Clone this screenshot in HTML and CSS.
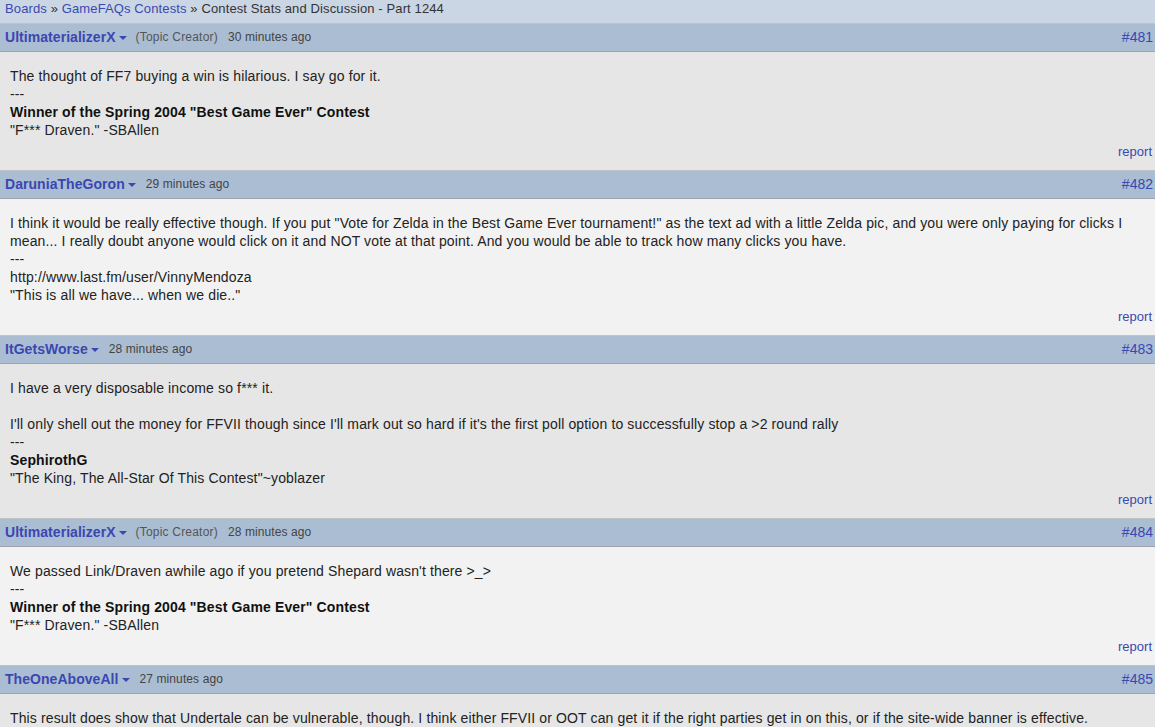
FILE: index.html
```html
<!DOCTYPE html>
<html>
<head>
<meta charset="utf-8">
<link rel="stylesheet" href="styles.css">
</head>
<body>
<div class="crumbs"><a href="#">Boards</a> » <a href="#">GameFAQs Contests</a> » Contest Stats and Discussion - Part 1244</div>
<div class="posts">
  <div class="post odd">
    <div class="phead">
      <div class="who"><a class="user" href="#">UltimaterializerX</a><span class="caret"></span><span class="tc">(Topic Creator)</span><span class="time">30 minutes ago</span></div>
      <a class="num" href="#">#481</a>
    </div>
    <div class="pbody">
      <div class="msg">The thought of FF7 buying a win is hilarious. I say go for it.<br>---<br><b>Winner of the Spring 2004 "Best Game Ever" Contest</b><br>"F*** Draven." -SBAllen</div>
      <div class="foot"><a href="#">report</a></div>
    </div>
  </div>
  <div class="post even">
    <div class="phead">
      <div class="who"><a class="user" href="#">DaruniaTheGoron</a><span class="caret"></span><span class="time">29 minutes ago</span></div>
      <a class="num" href="#">#482</a>
    </div>
    <div class="pbody">
      <div class="msg">I think it would be really effective though. If you put "Vote for Zelda in the Best Game Ever tournament!" as the text ad with a little Zelda pic, and you were only paying for clicks I mean... I really doubt anyone would click on it and NOT vote at that point. And you would be able to track how many clicks you have.<br>---<br>http://www.last.fm/user/VinnyMendoza<br>"This is all we have... when we die.."</div>
      <div class="foot"><a href="#">report</a></div>
    </div>
  </div>
  <div class="post odd">
    <div class="phead">
      <div class="who"><a class="user" href="#">ItGetsWorse</a><span class="caret"></span><span class="time">28 minutes ago</span></div>
      <a class="num" href="#">#483</a>
    </div>
    <div class="pbody">
      <div class="msg">I have a very disposable income so f*** it.<br><br>I'll only shell out the money for FFVII though since I'll mark out so hard if it's the first poll option to successfully stop a &gt;2 round rally<br>---<br><b>SephirothG</b><br>"The King, The All-Star Of This Contest"~yoblazer</div>
      <div class="foot"><a href="#">report</a></div>
    </div>
  </div>
  <div class="post even">
    <div class="phead">
      <div class="who"><a class="user" href="#">UltimaterializerX</a><span class="caret"></span><span class="tc">(Topic Creator)</span><span class="time">28 minutes ago</span></div>
      <a class="num" href="#">#484</a>
    </div>
    <div class="pbody">
      <div class="msg">We passed Link/Draven awhile ago if you pretend Shepard wasn't there &gt;_&gt;<br>---<br><b>Winner of the Spring 2004 "Best Game Ever" Contest</b><br>"F*** Draven." -SBAllen</div>
      <div class="foot"><a href="#">report</a></div>
    </div>
  </div>
  <div class="post odd">
    <div class="phead">
      <div class="who"><a class="user" href="#">TheOneAboveAll</a><span class="caret"></span><span class="time">27 minutes ago</span></div>
      <a class="num" href="#">#485</a>
    </div>
    <div class="pbody">
      <div class="msg">This result does show that Undertale can be vulnerable, though. I think either FFVII or OOT can get it if the right parties get in on this, or if the site-wide banner is effective.</div>
      <div class="foot"><a href="#">report</a></div>
    </div>
  </div>
</div>
</body>
</html>
```

FILE: styles.css
```css
html, body {
  margin: 0;
  padding: 0;
}
body {
  font-family: "Liberation Sans", Arial, sans-serif;
  font-size: 14px;
  color: #222;
  background: #e6e6e6;
  overflow: hidden;
}
a {
  color: #3a49b0;
  text-decoration: none;
}
.crumbs {
  height: 23px;
  box-sizing: border-box;
  padding: 0 5px;
  line-height: 17px;
  background: #cad6e4;
  color: #333;
  font-size: 13px;
  letter-spacing: 0.12px;
}
.phead {
  display: flex;
  justify-content: space-between;
  align-items: center;
  height: 29px;
  box-sizing: border-box;
  border-top: 1px solid #bfc3c8;
  border-bottom: 1px solid #a0a4aa;
  background: #aabdd3;
  padding: 0 2px 1px 5px;
}
.who {
  display: flex;
  align-items: center;
}
.user {
  font-weight: bold;
  color: #3b47b1;
  font-size: 14px;
  letter-spacing: 0.05px;
}
.caret {
  width: 0;
  height: 0;
  border-left: 4px solid transparent;
  border-right: 4px solid transparent;
  border-top: 4px solid #3b47b1;
  margin: 1px 0 0 3px;
}
.tc {
  color: #555;
  font-size: 12px;
  letter-spacing: 0.2px;
  margin-left: 9px;
}
.time {
  color: #444;
  font-size: 12px;
  letter-spacing: 0.1px;
  margin-left: 10px;
}
.num {
  color: #3b47b1;
  font-size: 14px;
}
.pbody {
  padding: 15px 3px 9px 10px;
}
.odd .pbody {
  background: #e6e6e6;
}
.even .pbody {
  background: #f2f2f2;
}
.msg {
  line-height: 18px;
  padding-right: 20px;
  letter-spacing: 0.13px;
}
.msg b {
  color: #111;
}
.foot {
  margin-top: 4px;
  text-align: right;
  line-height: 18px;
  font-size: 13px;
}
```
